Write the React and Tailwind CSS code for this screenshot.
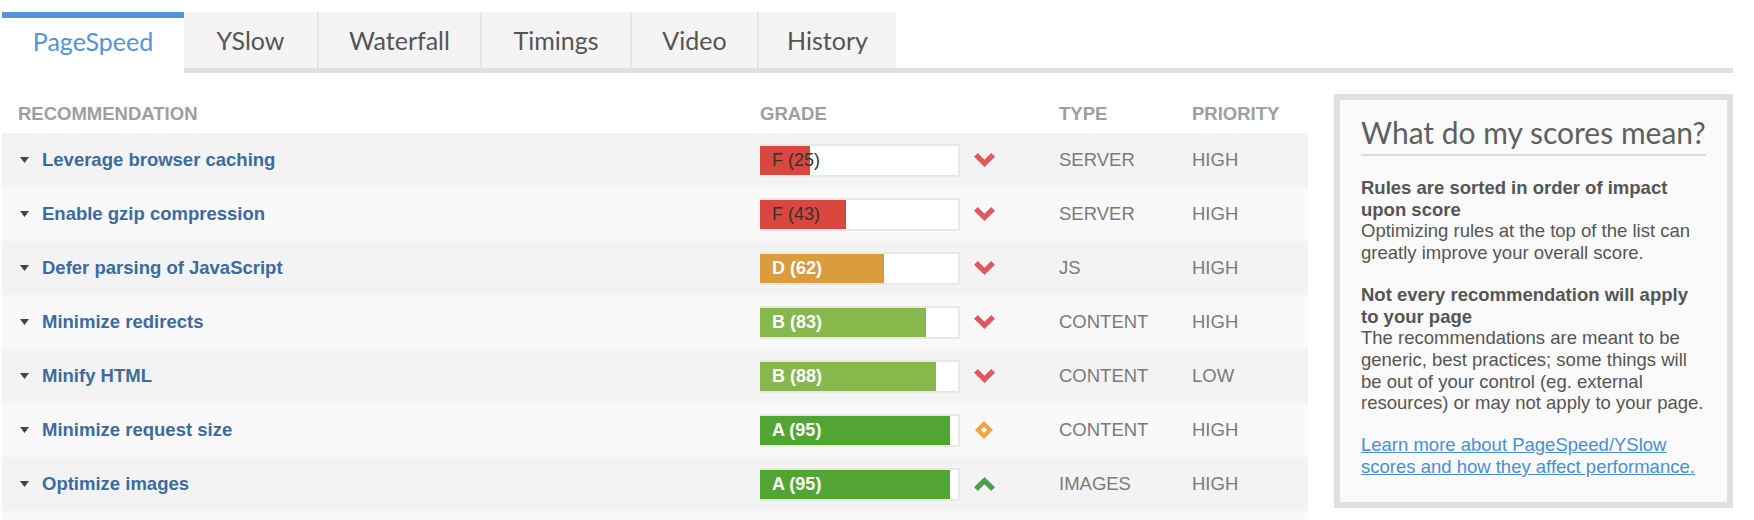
import React from "react";

const ROWS = [
  { name: "Leverage browser caching", grade: "F", score: 25, trend: "down", type: "SERVER", priority: "HIGH" },
  { name: "Enable gzip compression", grade: "F", score: 43, trend: "down", type: "SERVER", priority: "HIGH" },
  { name: "Defer parsing of JavaScript", grade: "D", score: 62, trend: "down", type: "JS", priority: "HIGH" },
  { name: "Minimize redirects", grade: "B", score: 83, trend: "down", type: "CONTENT", priority: "HIGH" },
  { name: "Minify HTML", grade: "B", score: 88, trend: "down", type: "CONTENT", priority: "LOW" },
  { name: "Minimize request size", grade: "A", score: 95, trend: "same", type: "CONTENT", priority: "HIGH" },
  { name: "Optimize images", grade: "A", score: 95, trend: "up", type: "IMAGES", priority: "HIGH" },
];

const GRADE_STYLE = {
  F: { bar: "bg-[#d9473f]", text: "text-[#333333]" },
  D: { bar: "bg-[#da9c3c]", text: "text-white font-bold" },
  B: { bar: "bg-[#86b84b]", text: "text-white font-bold" },
  A: { bar: "bg-[#52a533]", text: "text-white font-bold" },
};

const TABS = [
  { label: "YSlow", w: "w-[133px]" },
  { label: "Waterfall", w: "w-[163px]" },
  { label: "Timings", w: "w-[150px]" },
  { label: "Video", w: "w-[127px]" },
  { label: "History", w: "w-[139px]" },
];

const COLS = "grid grid-cols-[758px_212px_87px_133px_116px]";

const TrendIcon = ({ trend }) => {
  if (trend === "down")
    return (
      <svg width="21" height="14" viewBox="0 0 21 14">
        <path d="M0 3.8 L3.8 0 L10.5 6.7 L17.2 0 L21 3.8 L10.5 14 Z" fill="#e0575d" />
      </svg>
    );
  if (trend === "up")
    return (
      <svg width="21" height="14" viewBox="0 0 21 14">
        <path d="M0 10.2 L3.8 14 L10.5 7.3 L17.2 14 L21 10.2 L10.5 0 Z" fill="#4f9e4e" />
      </svg>
    );
  return (
    <svg width="20" height="20" viewBox="0 0 20 20">
      <path d="M10 1 L19 10 L10 19 L1 10 Z" fill="#f0a640" />
      <path d="M10 7 L13 10 L10 13 L7 10 Z" fill="#ffffff" />
    </svg>
  );
};

const GradeBar = ({ grade, score }) => {
  const s = GRADE_STYLE[grade];
  return (
    <div className="relative w-[200px] h-[33px] bg-white border-y-2 border-r-2 border-[#e8e8e8]">
      <div className={`h-full ${s.bar}`} style={{ width: score * 2 }} />
      <div className={`absolute inset-y-0 left-[12px] flex items-center whitespace-nowrap text-[18px] ${s.text}`}>
        {grade} ({score})
      </div>
    </div>
  );
};

export default function App() {
  return (
    <div className="w-[1754px] h-[520px] overflow-hidden bg-white font-['Liberation_Sans',Arial,sans-serif]">
      <div className="ml-[2px] w-[1731px] pt-[12px]">
        {/* tabs */}
        <div className="flex font-['Lato',sans-serif] text-[25px] leading-[30px]">
          <div className="w-[182px] h-[61px] border-t-[6px] border-[#5596d8] bg-white flex items-center justify-center pb-[9px] text-[#5294d6]">
            PageSpeed
          </div>
          <div className="flex-1 flex flex-col">
            <div className="flex h-[56px]">
              {TABS.map((t, i) => (
                <div
                  key={t.label}
                  className={`${t.w} bg-[#f4f4f4] flex items-center justify-center text-[#555555] ${i > 0 ? "border-l-2 border-[#e4e4e4]" : ""}`}
                >
                  {t.label}
                </div>
              ))}
            </div>
            <div className="h-[5px] bg-[#e0e0e0]" />
          </div>
        </div>

        <div className="flex gap-[26px]">
          {/* table */}
          <div className="w-[1306px]">
            <div className={`${COLS} h-[60px] items-end pb-[8px] text-[18.5px] leading-[22px] font-bold text-[#9e9e9e]`}>
              <div className="pl-[16px]">RECOMMENDATION</div>
              <div>GRADE</div>
              <div />
              <div>TYPE</div>
              <div>PRIORITY</div>
            </div>
            {ROWS.map((r, i) => (
              <div
                key={r.name}
                className={`${COLS} h-[54px] items-center text-[18.5px] leading-[22px] ${i % 2 === 0 ? "bg-[#f3f3f3]" : "bg-[#f9f9f9]"}`}
              >
                <div className="flex items-center pl-[18px]">
                  <svg width="9" height="6" viewBox="0 0 9 6" className="shrink-0">
                    <path d="M0 0 L9 0 L4.5 6 Z" fill="#444444" />
                  </svg>
                  <span className="ml-[13px] font-bold text-[#3c6b9e]">{r.name}</span>
                </div>
                <div>
                  <GradeBar grade={r.grade} score={r.score} />
                </div>
                <div className="flex items-center pl-[2px]">
                  <TrendIcon trend={r.trend} />
                </div>
                <div className="text-[#7b7b7b]">{r.type}</div>
                <div className="text-[#7b7b7b]">{r.priority}</div>
              </div>
            ))}
            <div className="h-[54px] bg-[#f9f9f9]" />
          </div>

          {/* side box */}
          <div className="mt-[21px] w-[399px] h-[414px] border-[6px] border-[#e0e0e0] bg-[#fafafa] pl-[21px] pr-[19px] pt-[14px]">
            <h2 className="font-['Lato',sans-serif] text-[30px] leading-[36px] text-[#5f5f5f] border-b-2 border-[#dddddd] pb-[4px] mr-[2px]">
              What do my scores mean?
            </h2>
            <div className="mt-[21px] text-[18.5px] leading-[21.7px] text-[#555555]">
              <p className="font-bold">Rules are sorted in order of impact upon score</p>
              <p>Optimizing rules at the top of the list can greatly improve your overall score.</p>
              <p className="mt-[20px] font-bold">Not every recommendation will apply to your page</p>
              <p>
                The recommendations are meant to be generic, best practices; some things will be out of your
                control (eg. external resources) or may not apply to your page.
              </p>
              <a href="#" className="block mt-[20px] text-[#4a8fd6] underline">
                Learn more about PageSpeed/YSlow scores and how they affect performance.
              </a>
            </div>
          </div>
        </div>
      </div>
    </div>
  );
}
